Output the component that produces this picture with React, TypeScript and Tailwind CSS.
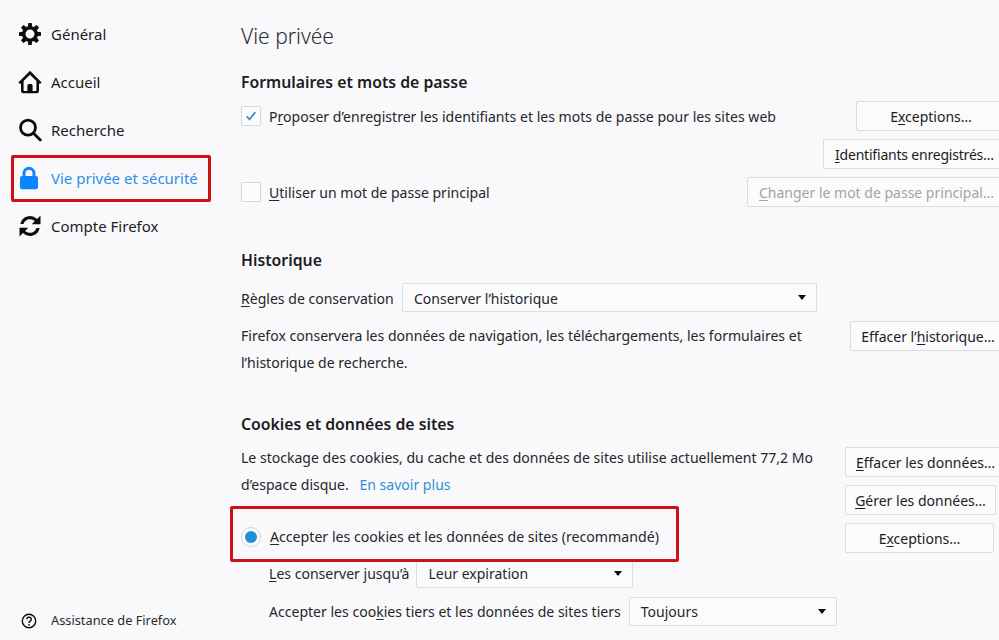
import type { ReactNode } from "react";

const GearIcon = () => (
  <svg viewBox="0 0 24 24" className="w-6 h-6 shrink-0" fill="#0c0c0d">
    <path
      fillRule="evenodd"
      d="M10.300 1h3.400l.5 3.400 1.500.6 2.800-2 2.500 2.500-2 2.800.6 1.500 3.400.5v3.400l-3.400.5-.6 1.500 2 2.800-2.500 2.500-2.800-2-1.500.6-.5 3.400h-3.400l-.5-3.400-1.500-.6-2.800 2-2.500-2.500 2-2.800-.6-1.500-3.400-.5v-3.400l3.400-.5.6-1.500-2-2.800 2.500-2.500 2.800 2 1.500-.6zM12 7.500a4.500 4.500 0 1 0 0 9 4.500 4.500 0 0 0 0-9z"
    />
  </svg>
);

const HomeIcon = () => (
  <svg viewBox="0 0 24 24" className="w-6 h-6 shrink-0" fill="#0c0c0d">
    <path
      fillRule="evenodd"
      d="M12 .8 23.600 12.400l-1.700 1.700-.9-.9V21a2.200 2.200 0 0 1-2.200 2.200H5.200A2.200 2.200 0 0 1 3 21v-7.800l-.9.9L.4 12.400zM12 4.700 5.600 11v9.300a.6.6 0 0 0 .6.6h3.200v-5.400a1.500 1.500 0 0 1 1.500-1.500h2.200a1.500 1.500 0 0 1 1.500 1.500v5.400h3.200a.6.6 0 0 0 .6-.6V11z"
    />
  </svg>
);

const SearchIcon = () => (
  <svg viewBox="0 0 24 24" className="w-6 h-6 shrink-0" fill="none" stroke="#0c0c0d" strokeWidth="2.800" strokeLinecap="round">
    <circle cx="10" cy="9.600" r="7.500" />
    <path d="m15.500 15.200 6.800 6.800" />
  </svg>
);

const LockIcon = () => (
  <svg viewBox="1 0 24 24" className="w-6 h-6 shrink-0" fill="#0a84ff">
    <path
      fillRule="evenodd"
      d="M12 .8a6.500 6.500 0 0 1 6.500 6.500V10H19a2 2 0 0 1 2 2v9.200a2 2 0 0 1-2 2H5a2 2 0 0 1-2-2V12a2 2 0 0 1 2-2h.5V7.300A6.500 6.500 0 0 1 12 .8zm0 3a3.500 3.500 0 0 0-3.500 3.500V10h7V7.300A3.500 3.500 0 0 0 12 3.800z"
    />
  </svg>
);

const SyncIcon = () => (
  <svg viewBox="0 0 24 24" className="w-6 h-6 shrink-0" fill="#0c0c0d">
    <path d="M22.500 1.500v8.700h-8.700l3.100-3.100A6.900 6.900 0 0 0 5.500 10H2.300a10 10 0 0 1 16.800-5.100z" />
    <path d="M1.500 22.500v-8.700h8.700l-3.100 3.100A6.900 6.900 0 0 0 18.500 14h3.200a10 10 0 0 1-16.800 5.100z" />
  </svg>
);

const HelpIcon = () => (
  <svg viewBox="0 0 16 16" className="w-4 h-4 shrink-0" fill="none" stroke="#0c0c0d">
    <circle cx="8" cy="8" r="6.700" strokeWidth="1.400" />
    <path d="M5.800 6.300a2.200 2.200 0 1 1 3.400 1.900c-.8.500-1.200.9-1.200 1.700" strokeWidth="1.500" />
    <circle cx="8" cy="11.800" r=".9" fill="#0c0c0d" stroke="none" />
  </svg>
);

const NavItem = ({ icon, label, active }: { icon: ReactNode; label: string; active?: boolean }) => (
  <div className={`h-12 flex items-center gap-[9px] text-[15px] ${active ? "text-[#2f8fe8]" : "text-[#1c1c1f]"}`}>
    {icon}
    <span>{label}</span>
  </div>
);

const Btn = ({ children, width, disabled }: { children: ReactNode; width: string; disabled?: boolean }) => (
  <button
    className={`${width} h-[30px] shrink-0 rounded-[2px] border border-[#dcdce0] bg-[#fbfbfc] text-[14px] ${
      disabled ? "text-[#a3a3a6]" : "text-[#1c1c1f]"
    }`}
  >
    {children}
  </button>
);

const Select = ({ value, width, textClass }: { value: string; width: string; textClass?: string }) => (
  <div className={`${width} h-[29px] shrink-0 flex items-center justify-between pl-[11px] pr-[10px] rounded-[2px] border border-[#dcdce0] bg-[#fbfbfc] text-[14px]`}>
    <span className={textClass}>{value}</span>
    <span className="w-0 h-0 border-x-[4.500px] border-x-transparent border-t-[5px] border-t-[#0c0c0d]" />
  </div>
);

const Heading = ({ children, className }: { children: ReactNode; className: string }) => (
  <h2 className={`h-6 leading-6 text-[15.800px] font-semibold text-[#1c1c1f] ${className}`}>{children}</h2>
);

export default function App() {
  return (
    <div
      className="relative w-[999px] h-[640px] overflow-hidden flex bg-[#f9f9fb] text-[#26262a] text-[14.050px]"
      style={{ fontFamily: '"Noto Sans", sans-serif' }}
    >
      {/* Sidebar */}
      <aside className="w-[241px] shrink-0 pl-[18px] pt-[10px] pb-[7px] flex flex-col justify-between">
        <nav>
          <NavItem icon={<GearIcon />} label="Général" />
          <NavItem icon={<HomeIcon />} label="Accueil" />
          <NavItem icon={<SearchIcon />} label="Recherche" />
          <NavItem icon={<LockIcon />} label="Vie privée et sécurité" active />
          <NavItem icon={<SyncIcon />} label="Compte Firefox" />
        </nav>
        <div className="h-6 pl-[3px] flex items-center gap-[14px] text-[12.800px] text-[#2a2a2e]">
          <HelpIcon />
          <span>Assistance de Firefox</span>
        </div>
      </aside>

      {/* Main */}
      <main className="w-[765px] shrink-0 pt-[20px]">
        <h1 className="h-8 leading-8 text-[21px] font-light text-[#2a2a2e]">Vie privée</h1>

        <Heading className="mt-[18px]">Formulaires et mots de passe</Heading>
        <div className="mt-[7px] h-[30px] flex items-center justify-between">
          <div className="flex items-center gap-2">
            <span className="w-5 h-5 rounded-[2px] border border-[#d7d7db] bg-[#fcfcfd] flex items-center justify-center">
              <svg viewBox="0 0 16 16" className="w-[14px] h-[14px]" fill="none" stroke="#3a94c8" strokeWidth="2">
                <path d="m3 8.500 3.300 3.300L13 3.500" />
              </svg>
            </span>
            <span className="pt-[2px]">
              P<u className="underline-offset-2">r</u>oposer d’enregistrer les identifiants et les mots de passe pour les sites web
            </span>
          </div>
          <Btn width="w-[150px]">
            E<u className="underline-offset-2">x</u>ceptions…
          </Btn>
        </div>
        <div className="mt-2 h-[30px] flex justify-end">
          <Btn width="w-[183px] tracking-[-0.2px]">
            <u className="underline-offset-2">I</u>dentifiants enregistrés…
          </Btn>
        </div>
        <div className="mt-2 h-[30px] flex items-center justify-between">
          <div className="flex items-center gap-2">
            <span className="w-5 h-5 rounded-[2px] border border-[#d7d7db] bg-[#fcfcfd]" />
            <span className="pt-[2px]">
              <u className="underline-offset-2">U</u>tiliser un mot de passe principal
            </span>
          </div>
          <Btn width="w-[259px]" disabled>
            <u className="underline-offset-2">C</u>hanger le mot de passe principal…
          </Btn>
        </div>

        <Heading className="mt-[41px]">Historique</Heading>
        <div className="mt-[11px] flex items-center gap-2">
          <span className="w-[153px] pt-[2px]">
            <u className="underline-offset-2">R</u>ègles de conservation
          </span>
          <Select value="Conserver l’historique" width="w-[415px]" textClass="pt-[2px]" />
        </div>
        <div className="mt-[9px] flex justify-between">
          <p className="mt-[1px] w-[590px] leading-[27px]">
            Firefox conservera les données de navigation, les téléchargements, les formulaires et l’historique de recherche.
          </p>
          <Btn width="w-[156px]">
            Effacer l’<u className="underline-offset-2">h</u>istorique…
          </Btn>
        </div>

        <Heading className="mt-[36px]">Cookies et données de sites</Heading>
        <div className="mt-2 flex justify-between">
          <div>
            <p className="w-[590px] leading-[27px]">
              Le stockage des cookies, du cache et des données de sites utilise actuellement 77,2 Mo d’espace disque.{" "}
              <span className="ml-[7px] text-[#2f8fd6]">En savoir plus</span>
            </p>
            <div className="mt-[27px] h-6 flex items-center gap-[9px]">
              <span className="w-5 h-5 rounded-full border border-[#d7d7db] bg-[#fcfcfd] flex items-center justify-center">
                <span className="w-3 h-3 rounded-full bg-[#1f8fd6]" />
              </span>
              <span className="text-[14.150px]">
                <u className="underline-offset-2">A</u>ccepter les cookies et les données de sites (recommandé)
              </span>
            </div>
            <div className="mt-[10px] ml-[28px] flex items-center gap-[7px]">
              <span>
                <u className="underline-offset-2">L</u>es conserver jusqu’à
              </span>
              <Select value="Leur expiration" width="w-[217px]" />
            </div>
            <div className="mt-[9px] ml-[28px] flex items-center gap-[8px]">
              <span>
                Accepter les coo<u className="underline-offset-2">k</u>ies tiers et les données de sites tiers
              </span>
              <Select value="Toujours" width="w-[208px]" />
            </div>
          </div>
          <div className="pt-[3px] w-[161px] flex flex-col gap-2">
            <Btn width="w-full">
              <u className="underline-offset-2">E</u>ffacer les données…
            </Btn>
            <Btn width="w-[151px]">
              <u className="underline-offset-2">G</u>érer les données…
            </Btn>
            <Btn width="w-[149px]">
              E<u className="underline-offset-2">x</u>ceptions…
            </Btn>
          </div>
        </div>
      </main>

      {/* Annotation boxes */}
      <div className="absolute left-[11px] top-[155px] w-[200px] h-[47px] border-[3px] border-[#cc1119] rounded-[2px]" />
      <div className="absolute left-[230px] top-[506px] w-[449px] h-[56px] border-[3px] border-[#cc1119] rounded-[2px]" />
    </div>
  );
}
